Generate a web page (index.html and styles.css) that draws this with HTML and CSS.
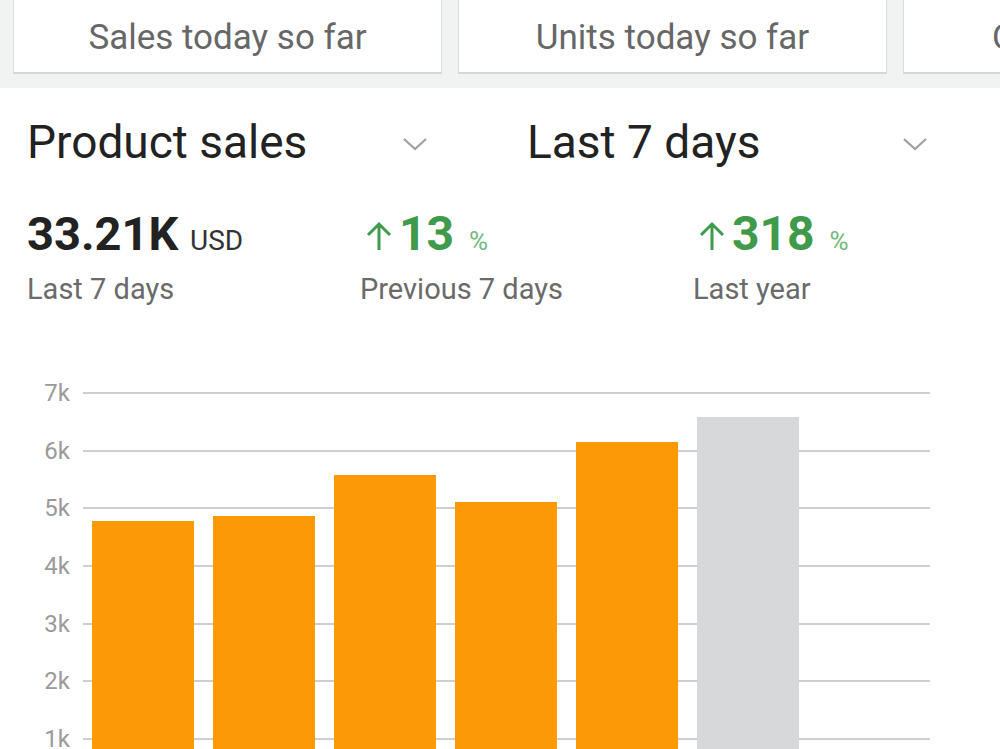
FILE: index.html
```html
<!DOCTYPE html>
<html lang="en">
<head>
    <meta charset="UTF-8">
    <meta name="viewport" content="width=device-width, initial-scale=1.0">
    <title>Sales dashboard</title>
    <link rel="stylesheet" href="styles.css">
</head>
<body>
    <div class="tiles">
        <div class="tile">Sales today so far</div>
        <div class="tile">Units today so far</div>
        <div class="tile tile-wide">Orders today so far</div>
    </div>

    <div class="panel">
        <div class="selectors">
            <div class="select">
                <span>Product sales</span>
                <svg class="chevron" width="26" height="14" viewBox="0 0 26 14"><polyline points="2,2 13,12 24,2"/></svg>
            </div>
            <div class="select">
                <span>Last 7 days</span>
                <svg class="chevron" width="26" height="14" viewBox="0 0 26 14"><polyline points="2,2 13,12 24,2"/></svg>
            </div>
        </div>

        <div class="stats">
            <div class="stat">
                <div class="value">33.21K <span class="unit">USD</span></div>
                <div class="label">Last 7 days</div>
            </div>
            <div class="stat">
                <div class="value up">
                    <svg class="arrow" width="26" height="30" viewBox="0 0 26 30"><path d="M13 29V3M2 14L13 3l11 11"/></svg>13 <span class="pct">%</span>
                </div>
                <div class="label">Previous 7 days</div>
            </div>
            <div class="stat">
                <div class="value up">
                    <svg class="arrow" width="26" height="30" viewBox="0 0 26 30"><path d="M13 29V3M2 14L13 3l11 11"/></svg>318 <span class="pct">%</span>
                </div>
                <div class="label">Last year</div>
            </div>
        </div>

        <div class="chart">
            <div class="row"><span class="tick">7k</span><span class="line"></span></div>
            <div class="row"><span class="tick">6k</span><span class="line"></span></div>
            <div class="row"><span class="tick">5k</span><span class="line"></span></div>
            <div class="row"><span class="tick">4k</span><span class="line"></span></div>
            <div class="row"><span class="tick">3k</span><span class="line"></span></div>
            <div class="row"><span class="tick">2k</span><span class="line"></span></div>
            <div class="row"><span class="tick">1k</span><span class="line"></span></div>
            <div class="row"><span class="tick"></span><span class="line"></span></div>

            <!-- bars sit on top of the grid lines, height = value * 57.7px per 1k -->
            <div class="bars">
                <div class="bar" style="height: 275.8px"></div>
                <div class="bar" style="height: 281.0px"></div>
                <div class="bar" style="height: 322.0px"></div>
                <div class="bar" style="height: 294.9px"></div>
                <div class="bar" style="height: 354.9px"></div>
                <div class="bar today" style="height: 379.7px"></div>
            </div>
        </div>
    </div>
</body>
</html>
```

FILE: styles.css
```css
body {
    font-family: Roboto, "Liberation Sans", Arial, sans-serif;
    background-color: #fff;
    margin: 0;
    padding: 0;
    overflow: hidden;
}

/* summary tiles along the top */
.tiles {
    display: flex;
    gap: 16px;
    padding: 0 0 14px 13px;
    background-color: #f1f2f2;
    white-space: nowrap;
}
.tile {
    flex: 0 0 429px;
    height: 74px;
    box-sizing: border-box;
    display: flex;
    align-items: center;
    justify-content: center;
    padding-top: 3px;
    background-color: #fff;
    border: 1px solid #dcdcdc;
    border-top: none;
    border-bottom: 2px solid #d6d6d6;
    color: #676767;
    font-size: 35px;
}
.tile-wide {
    padding-left: 46px;
}

.panel {
    padding-top: 27px;
}

/* dropdowns */
.selectors {
    display: flex;
}
.select {
    flex: 0 0 500px;
    box-sizing: border-box;
    display: flex;
    align-items: center;
    justify-content: space-between;
    padding: 0 72px 0 27px;
    font-size: 46px;
    line-height: 54px;
    color: #222;
}
.chevron {
    margin-top: 4px;
}
.chevron polyline {
    fill: none;
    stroke: #a0a0a0;
    stroke-width: 2.2;
}

/* headline numbers */
.stats {
    display: flex;
    margin-top: 37px;
}
.stat {
    flex: 0 0 333px;
    padding-left: 27px;
    box-sizing: border-box;
}
.value {
    font-size: 47px;
    font-weight: 700;
    line-height: 56px;
    color: #222;
}
.unit {
    font-size: 28px;
    font-weight: 400;
    color: #333;
}
.value.up {
    color: #3f9a4b;
    padding-left: 6px;
    font-size: 48px;
}
.arrow {
    margin-right: 7px;
    vertical-align: -1px;
}
.arrow path {
    fill: none;
    stroke: #3f9a4b;
    stroke-width: 3;
}
.pct {
    margin-left: 3px;
    font-size: 26px;
    font-weight: 400;
    color: #72b97c;
}
.label {
    margin-top: 3px;
    font-size: 29px;
    line-height: 34px;
    color: #6a6a6a;
}

/* bar chart */
.chart {
    position: relative;
    margin-top: 87px;
    width: 930px;
}
.row {
    display: flex;
    height: 57.7px;
}
.tick {
    width: 70px;
    text-align: right;
    font-size: 24px;
    line-height: 0;
    color: #9a9a9a;
}
.line {
    flex: 1;
    margin-left: 13px;
    height: 0;
    border-top: 2px solid #cfcfcf;
    margin-top: -1px;
}
.bars {
    position: absolute;
    left: 92px;
    top: 0;
    height: 404px;
    display: flex;
    align-items: flex-end;
    gap: 19px;
}
.bar {
    width: 102px;
    background-color: #fb9a06;
}
.bar.today {
    background-color: #d6d8da;
}
```
